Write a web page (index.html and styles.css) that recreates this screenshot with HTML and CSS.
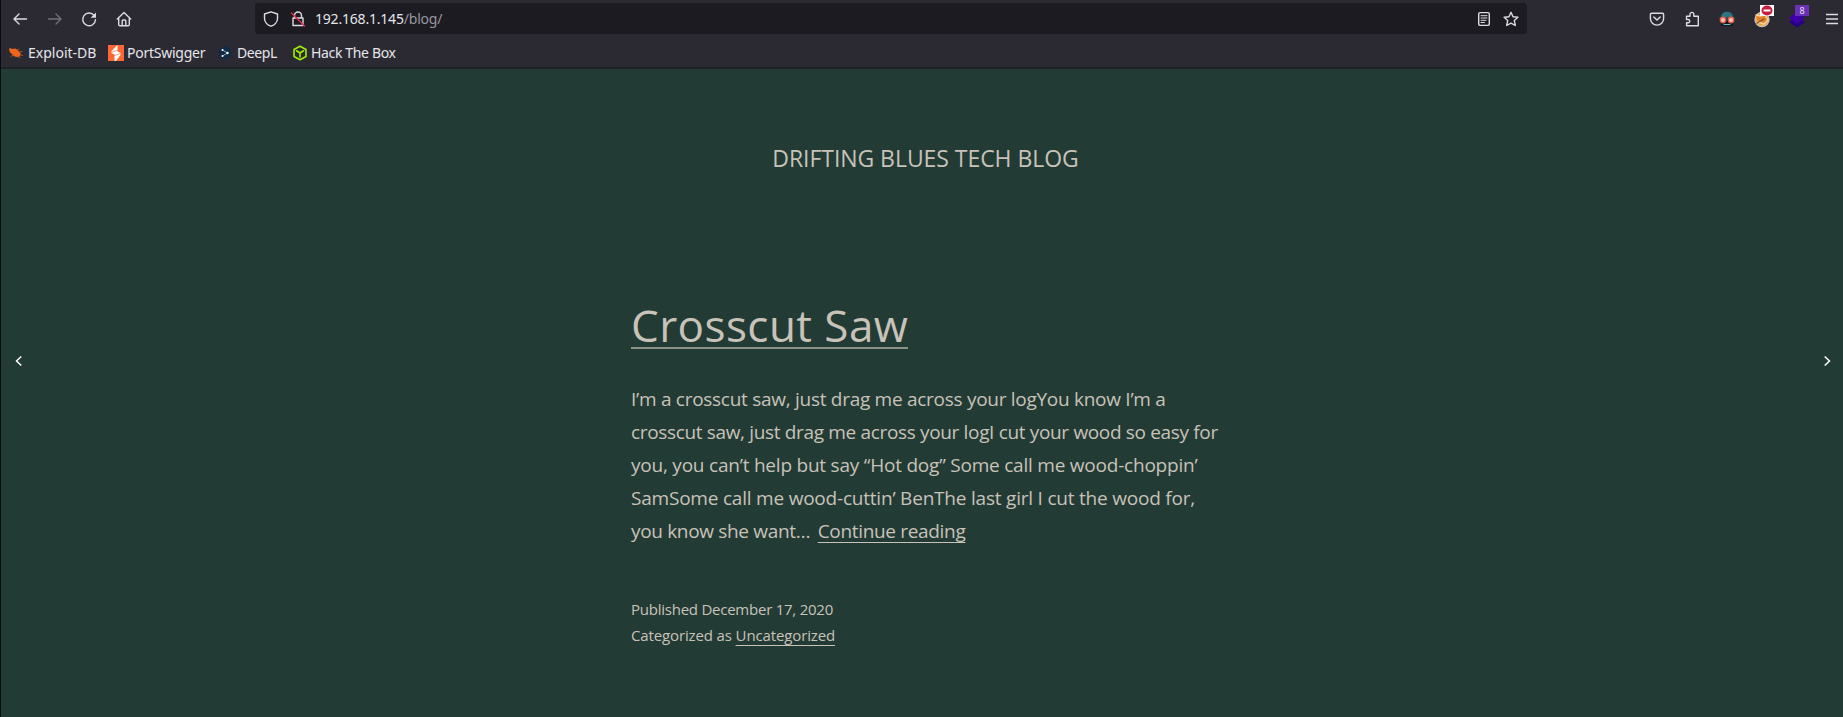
FILE: index.html
```html
<!DOCTYPE html>
<html lang="en">
<head>
<meta charset="utf-8">
<title>Drifting Blues Tech Blog</title>
<link rel="stylesheet" href="styles.css">
</head>
<body>
<div class="browser">
  <header class="chrome">
    <div class="toolbar">
      <nav class="nav">
        <svg class="icon" viewBox="0 0 16 16"><path d="M14.500 8H2M7 3 2 8l5 5"/></svg>
        <svg class="icon dim" viewBox="0 0 16 16"><path d="M1.500 8H14M9 3l5 5-5 5"/></svg>
        <svg class="icon" viewBox="0 0 16 16"><path d="M13.200 4.500A6.400 6.400 0 1 0 14.500 8.800"/><path class="solid" d="M15 1.500v5.300H9.700z"/></svg>
        <svg class="icon" viewBox="0 0 16 16"><path d="M1.300 8 8 1.500 14.700 8M2.700 7v6.500q0 1.200 1.200 1.200h8.200q1.200 0 1.200-1.200V7M6.200 14.500V10q0-1 1-1h1.600q1 0 1 1v4.500"/></svg>
      </nav>
      <div class="urlbar">
        <svg class="icon shield" viewBox="0 0 16 16"><path d="M8 .8 14.500 3v4.500c0 3.500-3 6.600-6.500 7.700C4.500 14.100 1.500 11 1.500 7.500V3z"/></svg>
        <svg class="icon lock" viewBox="0 0 16 16"><path d="M4.500 7V4.500a3.500 3.500 0 0 1 7 0V7M3 7h10v7.500H3z"/><path class="slash" d="M1.500 2 14.500 15"/></svg>
        <span class="url">192.168.1.145<span class="path">/blog/</span></span>
        <svg class="icon reader" viewBox="0 0 16 16"><rect x="2.700" y="1.600" width="10.600" height="12.800" rx="1.500"/><path class="thin" d="M5 4.700h6M5 7h6M5 9.300h5M5 11.500h3.500"/></svg>
        <svg class="icon star" viewBox="0 0 16 16"><path d="m8 1.300 2 4.400 4.900.6-3.600 3.300 1 4.900L8 12.100l-4.300 2.400 1-4.900L1.100 6.300 6 5.700z"/></svg>
      </div>
      <div class="addons">
        <svg class="icon" viewBox="0 0 16 16"><path d="M2.600 2.300h10.800q1.200 0 1.200 1.200V7.500a6.600 6.600 0 0 1-13.200 0V3.500q0-1.200 1.200-1.200zM4.800 6 8 9.100 11.200 6"/></svg>
        <svg class="icon" viewBox="0 0 16 16"><path d="M2.500 5.200H6V3.300a1.900 1.900 0 0 1 3.800 0v1.900h4.500v9.600H2.600v-3h1.500a1.600 1.600 0 0 0 0-3.300H2.500z"/></svg>
        <svg class="icon" viewBox="0 0 16 16"><path d="M2 6.500C2 2.500 5 .8 8 .8s6 1.700 6 5.700z" fill="#2c7280" stroke="none"/><path d="M.5 6h15v1.500H.5z" fill="#235865" stroke="none"/><path d="M2 9h12v6H2z" fill="#111820" stroke="none"/><circle cx="4" cy="9" r="2.700" fill="#f7c6b8" stroke="#e45d49"/><circle cx="12" cy="9" r="2.700" fill="#f7c6b8" stroke="#e45d49"/><path d="M5 13.500h6" stroke="#65c0c4" stroke-width="1.200"/></svg>
        <span class="addon"><svg class="icon" viewBox="0 0 16 16"><circle cx="8" cy="8.500" r="7" fill="#f1a340" stroke="#c9c1b5"/><path d="M2 4 6 5l5-1 3 5-4 4-6-2" fill="#e88024" stroke="#f6d6a0"/><path d="m3 12 7-4" stroke="#705344"/></svg><span class="badge block"><svg viewBox="0 0 14 11"><ellipse cx="7" cy="5.500" rx="5.500" ry="5" fill="#c41e3d"/><path d="M3.500 4.500h7v2h-7z" fill="#fff"/></svg></span></span>
        <span class="addon"><svg class="icon" viewBox="0 0 16 16"><path d="m0 11 8-5 8 5-8 5.500z" fill="#250083" stroke="none"/><path d="m0 7 8-6 8 6-8 6z" fill="#4000a7" stroke="none"/></svg><span class="badge count">8</span></span>
        <svg class="icon menu" viewBox="0 0 16 16"><path d="M2 3.500h12M2 8h12M2 12.500h12"/></svg>
      </div>
    </div>
    <div class="bookmarks">
      <span class="mark exploit"><svg class="icon" viewBox="0 0 16 16"><path d="M1 3.500q2-.5 3 .5 3-1 5 .5l3.500 3.500q.5 3-2 4-5 .5-6.500-3-3-2-3-5.500z" fill="#ee661c" stroke="none"/><path d="M9 5l2-1M11 7l3-.5M12 9.500l2.500 1M9 11l3 2M5 10l-2 1.500" stroke="#c95722" stroke-width=".8"/></svg><span>Exploit-DB</span></span>
      <span class="mark port"><svg class="icon" viewBox="0 0 16 16"><path d="M0 0h16v16H0z" fill="#ff6633" stroke="none"/><path d="M9.500 0v5.500H8L12.500 8v2L8 16H6.500v-5.500H8L3.500 8V6z" fill="#fff" stroke="none"/><path d="m4 7.200 4-1.500M8 10.200l4-1.500" stroke="#ff6633" stroke-width=".6"/></svg><span>PortSwigger</span></span>
      <span class="mark deepl"><svg class="icon" viewBox="0 0 16 16"><path d="m8 1 6 3.300v7L8 15l-6-3.700v-7z" fill="#0f2b46" stroke="none"/><path d="m5.500 5 5 3-5 3" stroke="#9fb1c2" stroke-width=".9"/><g fill="#fff" stroke="none"><circle cx="5.500" cy="5" r="1"/><circle cx="10.500" cy="8" r="1.200"/><circle cx="5.500" cy="11" r="1"/></g></svg><span>DeepL</span></span>
      <span class="mark htb"><svg class="icon" viewBox="0 0 16 16"><path d="m8 1.200 6 3.300v7L8 14.800l-6-3.300v-7zM4.500 5.800 8 8l3.500-2.200M8 8v4" stroke="#9fef00" stroke-width="1.600"/></svg><span>Hack The Box</span></span>
    </div>
  </header>
  <main class="page">
    <svg class="arrow" viewBox="0 0 8 12"><path d="M6.300 1.500 1.500 6l4.800 4.500"/></svg>
    <div class="blog">
      <div class="site-title">DRIFTING BLUES TECH BLOG</div>
      <article class="post">
        <h1><a>Crosscut Saw</a></h1>
        <p class="excerpt">
          <span class="l1">I’m a crosscut saw, just drag me across your logYou know I’m a</span>
          <span class="l2">crosscut saw, just drag me across your logI cut your wood so easy for</span>
          <span class="l3">you, you can’t help but say “Hot dog” Some call me wood-choppin’</span>
          <span class="l4">SamSome call me wood-cuttin’ BenThe last girl I cut the wood for,</span>
          <span class="l5">you know she want… <a>Continue reading</a></span>
        </p>
        <div class="meta">
          <div class="date">Published December 17, 2020</div>
          <div class="cat">Categorized as <a>Uncategorized</a></div>
        </div>
      </article>
    </div>
    <svg class="arrow" viewBox="0 0 8 12"><path d="M1.700 1.500 6.500 6l-4.800 4.500"/></svg>
  </main>
</div>
</body>
</html>
```
FILE: styles.css
```css
* { box-sizing: border-box; }
body { margin: 0; font-family: "Open Sans", "Noto Sans", sans-serif; }
.browser { display: flex; flex-direction: column; width: 1843px; height: 717px; border-left: 1px solid #080b18; overflow: hidden; background: #233b35; }
.chrome { height: 69px; background: #2b2a33; border-bottom: 2px solid #1d2226; color: #e6e5ea; }
.toolbar { display: flex; height: 37px; padding-top: 3px; }
.icon { width: 16px; height: 16px; flex: none; display: block; fill: none; stroke: #dcdbe1; stroke-width: 1.4; stroke-linecap: round; stroke-linejoin: round; overflow: visible; }
.dim { stroke: #716f78; }
.solid { fill: #dcdbe1; stroke: none; }
.thin { stroke-width: 1; }
.slash { stroke: #e22850; }
.nav { display: flex; align-items: center; gap: 18.600px; width: 254px; height: 32px; padding-left: 11px; }
.urlbar { display: flex; align-items: center; width: 1272px; height: 31px; padding: 0 8px; border-radius: 4px; background: #1c1b22; }
.lock { margin: 0 9px 0 11px; }
.url { flex: 1; font-family: "Noto Sans", sans-serif; font-size: 14px; line-height: 20px; letter-spacing: -.2px; }
.path { color: #98979f; }
.reader { margin-right: 11px; }
.addons { display: flex; align-items: center; gap: 19px; height: 32px; padding-left: 122px; }
.addon { position: relative; }
.badge { position: absolute; left: 6px; top: -6px; width: 14px; height: 11px; }
.block { background: #fff; }
.block svg { display: block; width: 14px; height: 11px; }
.count { background: #6b2fba; color: #eee; font-size: 9px; line-height: 11px; text-align: center; }
.menu { stroke-linecap: butt; }
.bookmarks { display: flex; height: 31px; padding-left: 7px; font-family: "Noto Sans", sans-serif; font-size: 14px; line-height: 20px; letter-spacing: -.25px; }
.mark { display: flex; align-items: center; gap: 4px; white-space: nowrap; }
.exploit { width: 100px; letter-spacing: 0; }
.port { width: 109px; gap: 3px; }
.deepl { width: 75px; letter-spacing: -.4px; }
.htb { gap: 3px; letter-spacing: -.35px; }
.page { display: flex; justify-content: space-between; flex: 1; padding: 0 12px 0 14px; }
.arrow { width: 8px; height: 12px; margin-top: 286px; flex: none; fill: none; stroke: #fff; stroke-width: 1.5; }
.blog { width: 584px; color: #c8c2b9; white-space: nowrap; }
.site-title { margin: 72px 0 0 5px; text-align: center; font-size: 23px; line-height: 34px; letter-spacing: -.05px; }
h1 { height: 60px; margin: 120px 0 0; font-size: 44px; line-height: 60px; font-weight: 400; }
h1 a { display: inline-block; height: 54px; border-bottom: 2px solid #8d9289; line-height: 60px; letter-spacing: .45px; }
.excerpt { margin: 28px 0 0; font-size: 19px; line-height: 33px; letter-spacing: -.35px; }
.excerpt span { display: block; width: max-content; }
.excerpt .l1 { letter-spacing: -.28px; }
.excerpt .l2 { letter-spacing: -.34px; }
.excerpt .l3 { letter-spacing: -.22px; }
.excerpt .l4 { letter-spacing: -.21px; }
.excerpt .l5 { letter-spacing: -.33px; }
.excerpt a, .cat a { text-decoration: underline; text-decoration-thickness: 1px; text-underline-offset: 4px; text-decoration-skip-ink: none; }
.excerpt a { margin-left: 3px; }
.meta { margin-top: 48px; font-size: 15px; line-height: 26px; letter-spacing: -.13px; }
.date { letter-spacing: -.24px; }
```
